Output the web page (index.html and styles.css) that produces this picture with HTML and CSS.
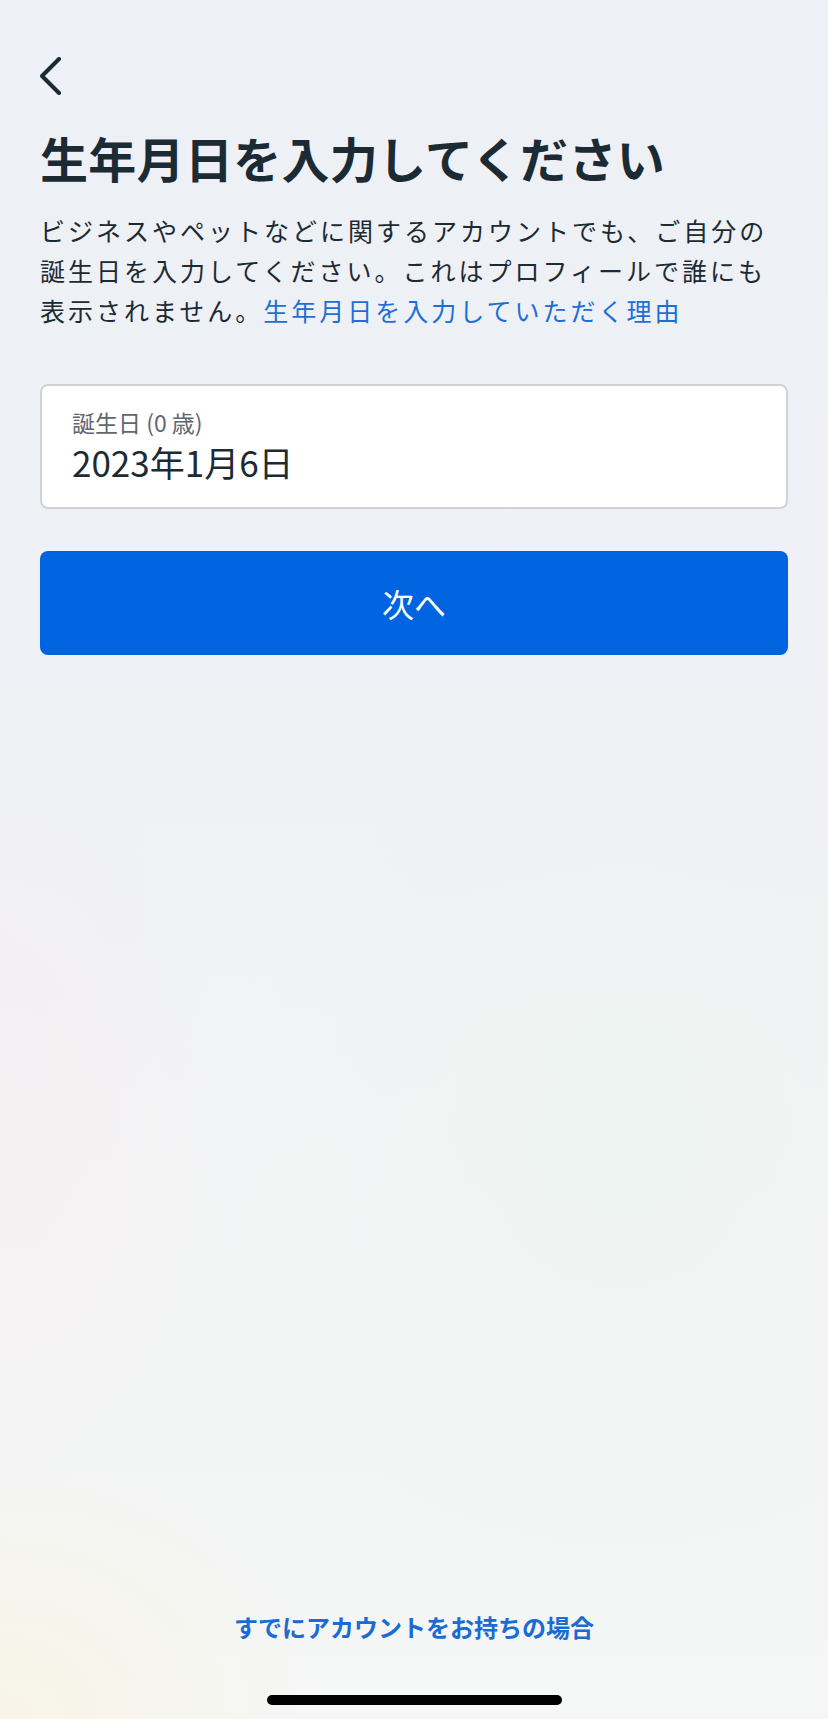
FILE: index.html
```html
<!DOCTYPE html>
<html lang="ja">
<head>
  <meta charset="UTF-8" />
  <title>生年月日を入力してください</title>
  <link rel="stylesheet" href="styles.css">
</head>
<body>

<div class="page">
  <div class="back-bar">
    <svg class="back-icon" width="24" height="40" viewBox="0 0 24 40">
      <path d="M19 2 L2 19 L19 36" />
    </svg>
  </div>

  <h1 class="title">生年月日を入力してください</h1>
  <p class="intro">ビジネスやペットなどに関するアカウントでも、ご自分の誕生日を入力してください。これはプロフィールで誰にも表示されません。<a href="#" class="link">生年月日を入力していただく理由</a></p>

  <div class="field">
    <span class="field-label">誕生日 (0 歳)</span>
    <span class="field-value">2023年1月6日</span>
  </div>

  <button class="next-btn">次へ</button>

  <div class="footer">
    <a href="#" class="login-link">すでにアカウントをお持ちの場合</a>
    <div class="home-indicator"></div>
  </div>
</div>

</body>
</html>
```

FILE: styles.css
```css
html, body {
  margin: 0;
  padding: 0;
}
body {
  font-family: "Noto Sans CJK JP", "Noto Sans", sans-serif;
  color: #1c2b33;
  background:
    radial-gradient(ellipse 220px 380px at 0 1120px, rgba(250,234,238,0.4), rgba(250,234,238,0) 100%),
    radial-gradient(ellipse 320px 260px at 0 1719px, rgba(250,245,225,0.7), rgba(250,245,225,0) 100%),
    radial-gradient(ellipse 380px 420px at 620px 1150px, rgba(236,244,240,0.8), rgba(236,244,240,0) 100%),
    linear-gradient(180deg, #edf0f6 0%, #eff1f5 45%, #f3f4f4 75%, #f5f6f6 100%);
}
.page {
  box-sizing: border-box;
  min-height: 100vh;
  padding: 0 40px;
  display: flex;
  flex-direction: column;
}
.back-bar {
  padding-top: 57px;
  height: 40px;
}
.back-icon {
  display: block;
}
.back-icon path {
  fill: none;
  stroke: #1c2b33;
  stroke-width: 4;
  stroke-linecap: round;
  stroke-linejoin: round;
}
.title {
  margin: 31px 0 0;
  font-size: 48px;
  line-height: 58px;
  font-weight: 700;
  letter-spacing: 0.3px;
}
.intro {
  margin: 24px 0 0;
  font-size: 25px;
  line-height: 40px;
  letter-spacing: 3px;
  color: #1c2b33;
}
.link {
  color: #1b6fd6;
  text-decoration: none;
}
/* Eingabefeld */
.field {
  margin-top: 54px;
  background: #fff;
  border: 2px solid #cfd3d8;
  border-radius: 8px;
  padding: 22px 30px 25px;
  display: flex;
  flex-direction: column;
}
.field-label {
  font-size: 23px;
  line-height: 28px;
  color: #606770;
}
.field-value {
  margin-top: 6px;
  font-size: 35px;
  line-height: 40px;
  color: #1c2b33;
}
.next-btn {
  margin-top: 42px;
  height: 104px;
  border: none;
  border-radius: 8px;
  background: #0064e0;
  color: #fff;
  font-family: inherit;
  font-size: 32px;
  font-weight: 400;
  display: flex;
  align-items: center;
  justify-content: center;
  cursor: pointer;
}
.footer {
  margin-top: auto;
  display: flex;
  flex-direction: column;
  align-items: center;
}
.login-link {
  font-size: 24px;
  line-height: 32px;
  font-weight: 700;
  color: #1a6bd2;
  text-decoration: none;
}
.home-indicator {
  margin: 52px 0 14px;
  width: 295px;
  height: 10px;
  border-radius: 5px;
  background: #000;
}
```
